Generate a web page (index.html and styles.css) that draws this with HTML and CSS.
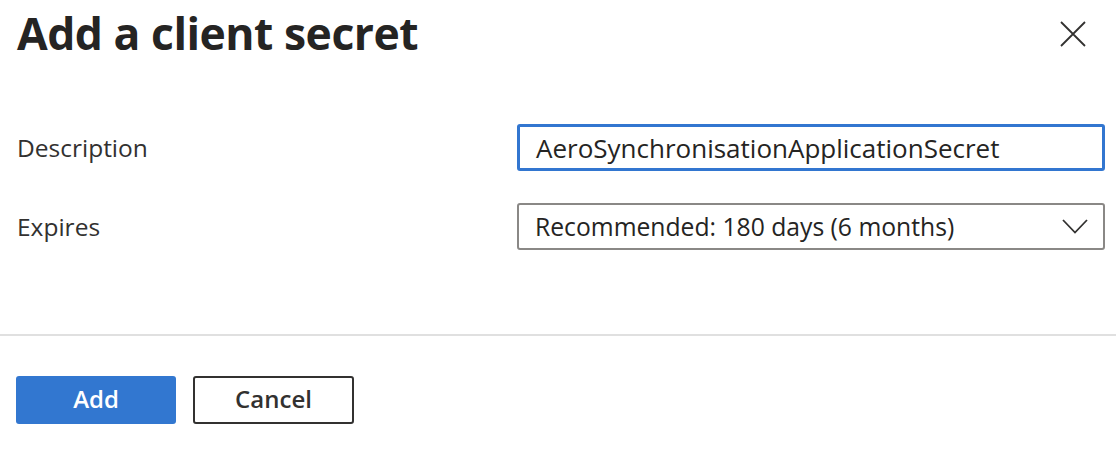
FILE: index.html
```html
<!DOCTYPE html>
<html lang="en">
<head>
<meta charset="utf-8">
<title>Add a client secret</title>
<link rel="stylesheet" href="styles.css">
</head>
<body>
<div class="panel">
  <header class="panel-header">
    <h1 class="panel-title">Add a client secret</h1>
    <button class="close-btn" aria-label="Close">
      <svg width="26" height="26" viewBox="0 0 26 26"><path d="M1 1 L25 25 M25 1 L1 25" stroke="#323130" stroke-width="1.8" fill="none"/></svg>
    </button>
  </header>
  <div class="form">
    <div class="form-row">
      <label class="form-label">Description</label>
      <div class="field field-focus">AeroSynchronisationApplicationSecret</div>
    </div>
    <div class="form-row">
      <label class="form-label">Expires</label>
      <div class="field field-select">
        <span>Recommended: 180 days (6 months)</span>
        <svg class="chevron" width="26" height="15" viewBox="0 0 26 15"><path d="M1 1 L13 13.5 L25 1" stroke="#323130" stroke-width="1.8" fill="none"/></svg>
      </div>
    </div>
  </div>
  <div class="divider"></div>
  <footer class="actions">
    <button class="btn btn-primary">Add</button>
    <button class="btn btn-default">Cancel</button>
  </footer>
</div>
</body>
</html>
```
FILE: styles.css
```css
html, body {
  margin: 0;
  padding: 0;
  background: #ffffff;
}
body {
  font-family: "Open Sans", "Noto Sans", sans-serif;
  color: #323130;
  width: 1116px;
  height: 463px;
  overflow: hidden;
}
.panel {
  display: flex;
  flex-direction: column;
}
.panel-header {
  display: flex;
  justify-content: space-between;
  align-items: flex-start;
  padding: 0 17px 0 17px;
  height: 124px;
}
.panel-title {
  margin: 0;
  font-size: 44.5px;
  font-weight: 700;
  line-height: 66px;
  color: #252423;
  letter-spacing: -0.5px;
}
.close-btn {
  border: 0;
  background: transparent;
  padding: 0;
  margin-top: 21px;
  margin-right: 13px;
  width: 26px;
  height: 26px;
  display: flex;
}
.form {
  display: flex;
  flex-direction: column;
  gap: 32px;
  padding: 0 11px 0 17px;
}
.form-row {
  display: flex;
  align-items: center;
  height: 47px;
}
.form-label {
  width: 500px;
  font-size: 24.5px;
  color: #323130;
}
.field {
  box-sizing: border-box;
  width: 588px;
  height: 47px;
  display: flex;
  align-items: center;
  padding: 0 16px 0 18px;
  font-size: 25px;
  color: #252423;
  border-radius: 3px;
}
.field-focus {
  border: 3px solid #3276d0;
  padding-left: 16px;
  font-size: 26px;
}
.field-select {
  border: 2px solid #8a8886;
  justify-content: space-between;
  padding-left: 16px;
  padding-right: 15px;
  font-size: 24.7px;
}
.divider {
  margin-top: 84px;
  height: 2px;
  background: #e0e0e0;
}
.actions {
  display: flex;
  gap: 17px;
  padding: 40px 0 0 16px;
}
.btn {
  box-sizing: border-box;
  height: 48px;
  width: 160px;
  border-radius: 3px;
  font-family: "Open Sans", "Noto Sans", sans-serif;
  font-size: 24px;
  font-weight: 600;
  padding: 0 0 3px 0;
  display: flex;
  align-items: center;
  justify-content: center;
}
.btn-primary {
  background: #3277d0;
  color: #ffffff;
  border: 0;
}
.btn-default {
  width: 161px;
  background: #ffffff;
  color: #323130;
  border: 2px solid #323130;
}
```
